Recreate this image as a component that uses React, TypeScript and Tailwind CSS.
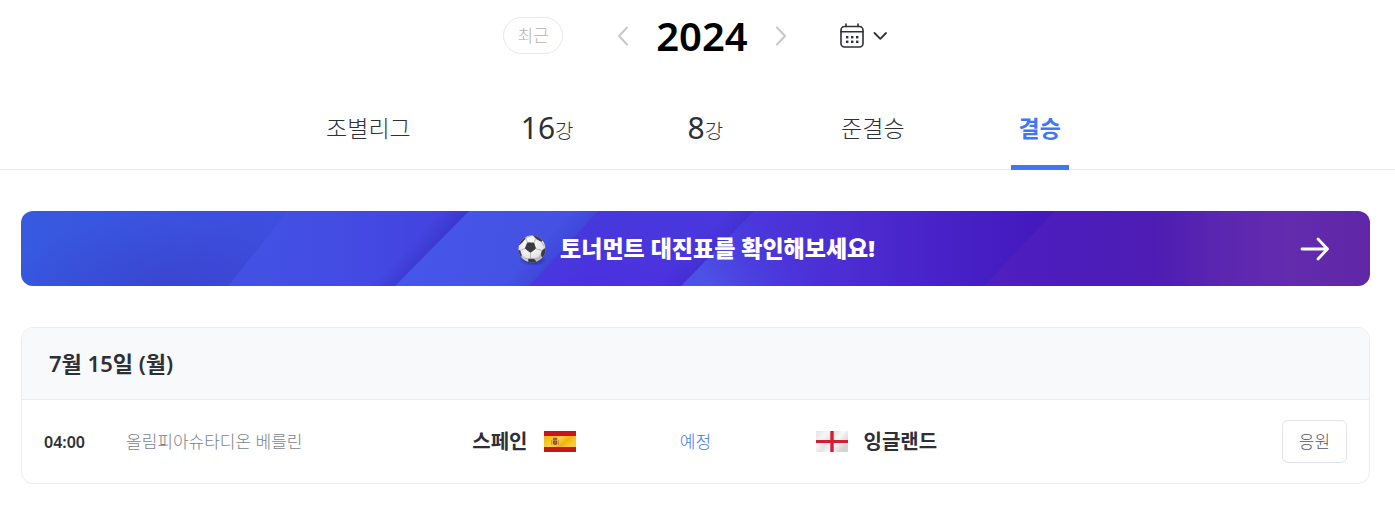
const SANS = "font-['Noto_Sans','Noto_Sans_CJK_KR',sans-serif]";

const tabs = [
  { label: '조별리그' },
  { num: '16', label: '강' },
  { num: '8', label: '강' },
  { label: '준결승' },
  { label: '결승', active: true },
];

const matches = [
  {
    time: '04:00',
    stadium: '올림피아슈타디온 베를린',
    home: '스페인',
    away: '잉글랜드',
    status: '예정',
  },
];

const Chevron = ({ d }: { d: string }) => (
  <svg width="14" height="20" viewBox="0 0 14 20" fill="none" stroke="#c8c8c8" strokeWidth="2" strokeLinecap="round" strokeLinejoin="round" aria-hidden="true">
    <path d={d} />
  </svg>
);

const CalendarIcon = () => (
  <svg width="24" height="26" viewBox="0 0 24 26" fill="none" stroke="#2e3037" strokeWidth="1.6" strokeLinecap="round" aria-hidden="true">
    <rect x="1" y="3.5" width="22" height="20.5" rx="3.5" />
    <path d="M1 8.8h22M6 1v2.5M18 1v2.5" />
    <g fill="#2e3037" stroke="none">
      <rect x="6" y="13" width="2.4" height="2.4" />
      <rect x="11" y="13" width="2.4" height="2.4" />
      <rect x="16" y="13" width="2.4" height="2.4" />
      <rect x="6" y="17.6" width="2.4" height="2.4" />
      <rect x="11" y="17.6" width="2.4" height="2.4" />
      <rect x="16" y="17.6" width="2.4" height="2.4" />
    </g>
  </svg>
);

const SoccerBall = () => (
  <svg width="32" height="36" viewBox="0 0 32 36" aria-hidden="true">
    <defs>
      <radialGradient id="ball" cx="0.42" cy="0.35" r="0.68">
        <stop offset="0" stopColor="#ffffff" />
        <stop offset="0.7" stopColor="#e6e6e9" />
        <stop offset="1" stopColor="#a9a9b2" />
      </radialGradient>
      <radialGradient id="ballShadow">
        <stop offset="0" stopColor="#14105a" stopOpacity="0.7" />
        <stop offset="1" stopColor="#14105a" stopOpacity="0" />
      </radialGradient>
      <clipPath id="ballClip">
        <circle cx="16" cy="18" r="13.5" />
      </clipPath>
    </defs>
    <ellipse cx="17" cy="29" rx="14" ry="6" fill="url(#ballShadow)" />
    <circle cx="16" cy="18" r="13.5" fill="url(#ball)" />
    <g clipPath="url(#ballClip)">
      <g fill="#3a3a3f" stroke="#3a3a3f" strokeWidth="0.8" strokeLinejoin="round">
        <path d="M11.5 11.8 17.8 12 19.6 17.6 14.5 21.4 9.2 17.4Z" />
        <path d="M4 10 8.5 6 9.5 7 5.5 12 3 14Z" />
        <path d="M17 4 22 4.5 27 9 25.5 10.5 20 7.5Z" />
        <path d="M30 17 26.3 19.5 25 24.5 27 26 31 21Z" />
        <path d="M2 19 3.8 19.5 5.5 24.5 4.5 26 2 22Z" />
        <path d="M12.5 28 18.5 28.2 20 31.5 13 32Z" />
      </g>
      <path d="M11.5 11.8 9.5 7M17.8 12 20 7.5M19.6 17.6 26.3 19.5M14.5 21.4 14.3 28M9.2 17.4 3.8 19.5M5.5 24.5 8.5 27 12.5 28M25 24.5 22.5 27 18.5 28.2M9.5 7 14 5 17 4M25.5 10.5 28 15" fill="none" stroke="#a0a0a8" strokeWidth="0.7" />
    </g>
  </svg>
);

const BannerArt = () => (
  <svg className="absolute inset-0 h-full w-full" viewBox="0 0 1349 75" preserveAspectRatio="none" aria-hidden="true">
    <defs>
      <linearGradient id="base" x1="0" x2="1" y1="0" y2="0">
        <stop offset="0" stopColor="#365ae0" />
        <stop offset="0.15" stopColor="#3d4fde" />
        <stop offset="0.35" stopColor="#4148e0" />
        <stop offset="0.42" stopColor="#4638dc" />
        <stop offset="0.52" stopColor="#4a38de" />
        <stop offset="0.6" stopColor="#4c2fd4" />
        <stop offset="0.68" stopColor="#4822c8" />
        <stop offset="0.75" stopColor="#431abe" />
        <stop offset="0.84" stopColor="#4c1cb2" />
        <stop offset="0.89" stopColor="#5b26b0" />
        <stop offset="0.94" stopColor="#632bae" />
        <stop offset="1" stopColor="#5f26a6" />
      </linearGradient>
      <radialGradient id="dusk" gradientUnits="userSpaceOnUse" cx="0" cy="0" r="1" gradientTransform="translate(150 75) scale(170 70)">
        <stop offset="0" stopColor="#3840c8" stopOpacity="0.7" />
        <stop offset="1" stopColor="#3840c8" stopOpacity="0" />
      </radialGradient>
      <linearGradient id="sheetA" gradientUnits="userSpaceOnUse" x1="235" x2="440" y1="0" y2="0">
        <stop offset="0" stopColor="#4453e6" stopOpacity="0.8" />
        <stop offset="1" stopColor="#4440e0" stopOpacity="0.9" />
      </linearGradient>
      <linearGradient id="sheetB" gradientUnits="userSpaceOnUse" x1="410" x2="560" y1="0" y2="30">
        <stop offset="0" stopColor="#4656e8" />
        <stop offset="1" stopColor="#4450e2" />
      </linearGradient>
      <linearGradient id="sheetC" gradientUnits="userSpaceOnUse" x1="690" x2="770" y1="75" y2="15">
        <stop offset="0" stopColor="#4c52e4" />
        <stop offset="1" stopColor="#4a35da" stopOpacity="0" />
      </linearGradient>
      <linearGradient id="sheetD" gradientUnits="userSpaceOnUse" x1="960" x2="1180" y1="0" y2="0">
        <stop offset="0" stopColor="#5820be" stopOpacity="0.6" />
        <stop offset="1" stopColor="#5a1fb8" stopOpacity="0" />
      </linearGradient>
      <linearGradient id="fold" gradientUnits="userSpaceOnUse" x1="-37" x2="-18" y1="37" y2="55">
        <stop offset="0" stopColor="#2a22b0" stopOpacity="0" />
        <stop offset="1" stopColor="#2a22b0" stopOpacity="0.4" />
      </linearGradient>
      <linearGradient id="floor" x1="0" x2="0" y1="0" y2="1">
        <stop offset="0" stopColor="#4a2be0" stopOpacity="0" />
        <stop offset="1" stopColor="#5a1fe0" stopOpacity="0.3" />
      </linearGradient>
    </defs>
    <rect width="1349" height="75" fill="url(#base)" />
    <rect width="360" height="75" fill="url(#dusk)" />
    <path d="M267 0H448L374 75H207Z" fill="url(#sheetA)" />
    <path d="M448 0H577L508 75H374Z" fill="url(#sheetB)" />
    <path d="M577 0H733L660 75H508Z" fill="url(#floor)" />
    <path d="M733 0H870L788 75H660Z" fill="url(#sheetC)" />
    <path d="M1034 0H1200V75H963Z" fill="url(#sheetD)" />
    <g fill="url(#fold)">
      <path transform="translate(422 0)" d="M0 0H26L-48 75H-74Z" />
      <path transform="translate(551 0)" d="M0 0H26L-43 75H-69Z" opacity="0.6" />
      <path transform="translate(707 0)" d="M0 0H26L-47 75H-73Z" opacity="0.8" />
    </g>
  </svg>
);

const SpainFlag = () => (
  <svg width="32" height="21" viewBox="0 0 32 21" aria-label="스페인 국기">
    <defs>
      <linearGradient id="gold" x1="0" x2="1" y1="0" y2="0.4">
        <stop offset="0" stopColor="#f0b414" />
        <stop offset="0.5" stopColor="#fbd23c" />
        <stop offset="0.75" stopColor="#f0b310" />
        <stop offset="1" stopColor="#f7cb3a" />
      </linearGradient>
    </defs>
    <rect width="32" height="21" fill="#c4161c" />
    <rect y="5" width="32" height="11" fill="url(#gold)" />
    <path d="M9.5 6.8h3.2l.8 1.4-.8 1h-3.2l-.8-1Z" fill="#b5532a" />
    <path d="M9 9.6h4.2v3.4q-2.1 2-4.2 0Z" fill="#a8452f" />
    <path d="M10.2 10.4h1.8v2h-1.8z" fill="#8b6a72" />
    <path d="M7.8 9v5M14.4 9v5" stroke="#a98a5a" strokeWidth="1" />
  </svg>
);

const EnglandFlag = () => (
  <svg width="32" height="21" viewBox="0 0 32 21" aria-label="잉글랜드 국기">
    <defs>
      <linearGradient id="cloth" x1="0" x2="1" y1="0" y2="0.5">
        <stop offset="0" stopColor="#e2e2e2" />
        <stop offset="0.3" stopColor="#f6f6f6" />
        <stop offset="0.5" stopColor="#e4e4e4" />
        <stop offset="0.7" stopColor="#f8f8f8" />
        <stop offset="1" stopColor="#d4d4d4" />
      </linearGradient>
    </defs>
    <rect width="32" height="21" fill="url(#cloth)" />
    <path d="M14.3 0h3.4v21h-3.4zM0 8.9h32v3.2H0z" fill="#cf1f35" />
  </svg>
);

const App = () => {
  return (
    <div className={`${SANS} bg-white pb-6 text-[#2e3037]`}>
      <header className="border-b border-[#e8e8e8]">
        <div className="flex h-[71px] items-center justify-center pr-1">
          <button type="button" className="h-[37px] w-[60px] rounded-full border border-[#e8e8e8] text-[17px] font-light text-[#b4b4b4]">
            최근
          </button>
          <div className="ml-[53px] flex items-center gap-[26px]">
            <button type="button" aria-label="이전 연도">
              <Chevron d="M11 1.5 3 10l8 8.5" />
            </button>
            <h1 className="text-[40px] leading-[72px] font-semibold text-black">2024</h1>
            <button type="button" aria-label="다음 연도">
              <Chevron d="M3 1.5 11 10l-8 8.5" />
            </button>
          </div>
          <button type="button" aria-label="날짜 선택" className="ml-[52px] flex items-center gap-2">
            <CalendarIcon />
            <svg width="16" height="10" viewBox="0 0 16 10" fill="none" stroke="#2e3037" strokeWidth="1.8" strokeLinecap="round" strokeLinejoin="round" aria-hidden="true">
              <path d="M2.5 2 8.3 7.8 14 2" />
            </svg>
          </button>
        </div>

        <nav className="flex h-[98px] items-stretch justify-center gap-[98px] pr-2">
          {tabs.map((tab) =>
            tab.num ? (
              <a key={tab.num} href="#" className="pt-[37px] pr-3 pl-1 text-xl leading-10 font-light">
                <span className="text-[30px] font-normal">{tab.num}</span>
                {tab.label}
              </a>
            ) : (
              <a
                key={tab.label}
                href="#"
                aria-current={tab.active ? 'page' : undefined}
                className={
                  tab.active
                    ? '-mb-px border-b-[5px] border-[#4176f4] px-2 pt-[37px] text-[23px] leading-10 font-bold text-[#4176f4]'
                    : 'px-2 pt-[37px] text-[23px] leading-10 font-light'
                }
              >
                {tab.label}
              </a>
            )
          )}
        </nav>
      </header>

      <main className="flex flex-col gap-[41px] pt-[41px] pr-[25px] pl-[21px]">
        <a href="#" className="relative flex h-[75px] items-center justify-center overflow-hidden rounded-xl">
          <BannerArt />
          <span className="relative flex items-center gap-3 text-[23px] font-black text-white">
            <SoccerBall />
            토너먼트 대진표를 확인해보세요!
          </span>
          <svg className="absolute right-10" width="30" height="24" viewBox="0 0 30 24" fill="none" stroke="#fff" strokeWidth="2.8" strokeLinecap="round" strokeLinejoin="round" aria-hidden="true">
            <path d="M2 12h25.5M18 2l9.5 10L18 22" />
          </svg>
        </a>

        <section className="overflow-hidden rounded-xl border border-[#ebecef]">
          <h2 className="border-b border-[#ebecef] bg-[#f8f9fb] px-[27px] text-[22px] leading-[71px] font-semibold">7월 15일 (월)</h2>
          <ul>
            {matches.map((match) => (
              <li key={match.time} className="grid h-[83px] grid-cols-[1fr_240px_1fr] items-center px-[22px]">
                <div className="flex items-center">
                  <time className="w-[82px] text-base font-semibold">{match.time}</time>
                  <span className="text-[17px] font-light text-[#7c7f88]">{match.stadium}</span>
                  <span className="ml-auto flex items-center gap-4 text-xl font-bold">
                    {match.home}
                    <SpainFlag />
                  </span>
                </div>
                <em className="text-center text-[17px] font-light text-[#4176f4] not-italic">{match.status}</em>
                <div className="flex items-center justify-between">
                  <span className="flex items-center gap-4 text-xl font-bold">
                    <EnglandFlag />
                    {match.away}
                  </span>
                  <button type="button" className="h-[43px] w-[65px] rounded-md border border-[#e3e4e8] text-[17px] font-light text-[#55575e]">
                    응원
                  </button>
                </div>
              </li>
            ))}
          </ul>
        </section>
      </main>
    </div>
  );
};

export default App;
